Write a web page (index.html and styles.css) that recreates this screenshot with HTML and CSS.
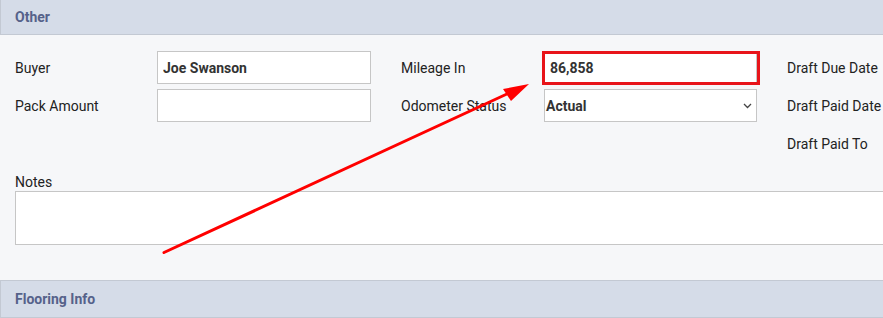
FILE: index.html
```html
<!DOCTYPE html>
<html>
<head>
<meta charset="utf-8">
<link rel="stylesheet" href="styles.css">
</head>
<body>
<div class="page">
  <div class="section-header">Other</div>
  <div class="section-body">
    <div class="form-grid">
      <label class="lbl">Buyer</label>
      <div class="field"><input class="input" type="text" value="Joe Swanson"></div>
      <label class="lbl lbl-mid">Mileage In</label>
      <div class="field"><input class="input" type="text" value="86,858"></div>
      <label class="lbl lbl-right">Draft Due Date</label>

      <label class="lbl">Pack Amount</label>
      <div class="field"><input class="input" type="text" value=""></div>
      <label class="lbl lbl-mid">Odometer Status</label>
      <div class="field select-wrap">
        <div class="select">Actual
          <svg class="chev" width="9" height="6" viewBox="0 0 9 6"><path d="M1 1 L4.5 4.5 L8 1" fill="none" stroke="#444" stroke-width="1.3"/></svg>
        </div>
      </div>
      <label class="lbl lbl-right">Draft Paid Date</label>

      <div class="spacer"></div>
      <div class="spacer"></div>
      <div class="spacer"></div>
      <div class="spacer"></div>
      <label class="lbl lbl-right">Draft Paid To</label>
    </div>
    <div class="notes">
      <label class="lbl notes-lbl">Notes</label>
      <textarea class="textarea"></textarea>
    </div>
  </div>
  <div class="section-header section-header-2">Flooring Info</div>

  <div class="highlight"></div>
  <svg class="arrow" width="883" height="318" viewBox="0 0 883 318">
    <line x1="164" y1="252.5" x2="508" y2="93.5" stroke="#f00" stroke-width="3" stroke-linecap="round"/>
    <polygon points="529,84 503,89 511,101" fill="#f00"/>
  </svg>
</div>
</body>
</html>
```

FILE: styles.css
```css
html, body {
  margin: 0;
  padding: 0;
  background: #f6f7f9;
  overflow: hidden;
}

.page {
  position: relative;
  width: 883px;
  height: 318px;
  overflow: hidden;
  font-family: Roboto, "Liberation Sans", Arial, sans-serif;
  font-size: 14px;
  color: #222;
}

.section-header {
  box-sizing: border-box;
  background: #d5dce8;
  border-left: 1px solid #c3c9d3;
  border-bottom: 1px solid #c3c9d3;
  height: 35px;
  padding-left: 14px;
  display: flex;
  align-items: center;
  font-weight: 700;
  font-size: 14px;
  color: #55628a;
}

.section-header-2 {
  border-top: 1px solid #c3c9d3;
  height: 38px;
}

.section-body {
  box-sizing: border-box;
  height: 245px;
  padding: 16px 0 0 15px;
  background: #f6f7f9;
}

.form-grid {
  display: grid;
  grid-template-columns: 142px 214px 173px 213px 1fr;
  grid-auto-rows: 33px;
  row-gap: 5px;
}

.lbl {
  display: flex;
  align-items: center;
  font-size: 14px;
  color: #222;
  white-space: nowrap;
}

.lbl-mid {
  padding-left: 30px;
}

.lbl-right {
  padding-left: 30px;
}

.field {
  display: flex;
}

.input {
  box-sizing: border-box;
  width: 100%;
  height: 33px;
  margin: 0;
  border: 1px solid #c6c6c6;
  background: #fff;
  padding: 0 0 0 5px;
  font-family: Roboto, "Liberation Sans", Arial, sans-serif;
  font-size: 14px;
  font-weight: 700;
  color: #333;
  outline: none;
}

.select {
  box-sizing: border-box;
  width: 100%;
  height: 33px;
  border: 1px solid #c6c6c6;
  background: #fff;
  padding: 0 0 0 1px;
  display: flex;
  align-items: center;
  justify-content: space-between;
  font-weight: 700;
  color: #333;
}

.chev {
  margin-right: 4px;
}

.notes {
  margin-top: 14px;
}

.notes-lbl {
  height: 17px;
  align-items: flex-start;
}

.textarea {
  display: block;
  box-sizing: border-box;
  width: 900px;
  height: 54px;
  margin: 0;
  border: 1px solid #c6c6c6;
  background: #fff;
  resize: none;
  outline: none;
}

.highlight {
  position: absolute;
  left: 542px;
  top: 51px;
  width: 218px;
  height: 34px;
  box-sizing: border-box;
  border: 3px solid #e8141a;
  pointer-events: none;
}

.arrow {
  position: absolute;
  left: 0;
  top: 0;
  pointer-events: none;
}
```
